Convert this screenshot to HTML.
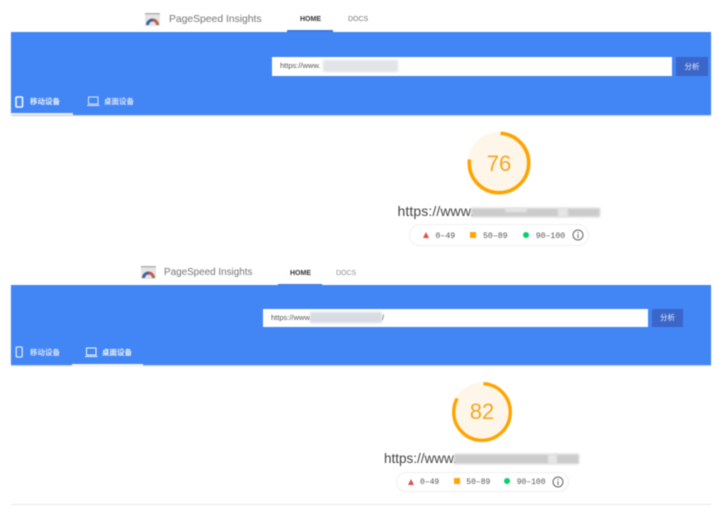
<!DOCTYPE html>
<html lang="zh"><head><meta charset="utf-8">
<style>
html,body{margin:0;padding:0;background:#fff}
#p{position:relative;width:727px;height:513px;overflow:hidden;background:#fff;font-family:"Liberation Sans","Noto Sans CJK SC",sans-serif;filter:blur(.45px)}
#p div{position:absolute;white-space:nowrap}
.b{background:#4285f4}
.ul{background:#3f78d8}
.inp{background:#fff;color:#555;font-size:7.5px}
.btn{background:#3b66c9;color:#e8eefc;font-size:7.5px;text-align:center}
.t{color:#e6eefc;font-size:7.5px;font-weight:bold}
.mono{font-family:"Liberation Mono","DejaVu Sans Mono",monospace;color:#555;font-size:8.2px}
.bl{background:#cbcbcb;filter:blur(1px)}
.pt{background:#e6e6e6;filter:blur(1px)}
.leg{border:1px solid #efefef;border-radius:12px;box-sizing:border-box;background:#fff}
svg{position:absolute;overflow:visible}
</style></head><body><div id="p">

<!-- top logo -->
<svg style="left:145px;top:13px" width="15" height="13" viewBox="0 0 15 13"><rect width="15" height="13" fill="#e4e4e4"/><rect width="15" height="1.4" fill="#b0b0b0"/><path d="M2.5 12A5 5 0 0 1 7.5 7" fill="none" stroke="#3f64a8" stroke-width="3"/><path d="M7.5 7A5 5 0 0 1 11 8.4" fill="none" stroke="#cf5048" stroke-width="3"/><path d="M11 8.4A5 5 0 0 1 12.5 12" fill="none" stroke="#a96a55" stroke-width="3"/></svg>
<div style="left:169px;top:13px;font-size:10.35px;line-height:13px;color:#757575">PageSpeed Insights</div>
<div style="left:300px;top:15px;font-size:7px;line-height:9px;font-weight:bold;color:#333">HOME</div>
<div style="left:348px;top:15px;font-size:7px;line-height:9px;color:#777">DOCS</div>
<div class="ul" style="left:287px;top:30px;width:46px;height:2px"></div>

<!-- top banner -->
<div class="b" style="left:11px;top:32px;width:700px;height:83px;box-shadow:0 1px 1px #c5cbd6"></div>
<div class="inp" style="left:272px;top:57px;width:400px;height:19px;line-height:18px"><span style="margin-left:8px">https://www.</span></div>
<div class="bl" style="left:323px;top:60px;width:75px;height:12px;background:#e2e4ea"></div>
<div class="btn" style="left:676px;top:57px;width:32px;height:19px;line-height:19px">分析</div>
<svg style="left:15px;top:96px" width="9" height="12" viewBox="0 0 9 12"><rect x="1" y="1" width="6.5" height="10" rx="1" fill="none" stroke="#f2f6ff" stroke-width="1.6"/></svg>
<div class="t" style="left:30px;top:96px;line-height:11px">移动设备</div>
<svg style="left:87px;top:96px" width="13" height="11" viewBox="0 0 13 11"><rect x="1.5" y="1" width="9.5" height="7" fill="none" stroke="#dbe6fb" stroke-width="1"/><path d="M0 9.5H12.5" stroke="#dbe6fb" stroke-width="1"/></svg>
<div class="t" style="left:104px;top:96px;line-height:11px;color:#d3e0fa">桌面设备</div>
<div style="left:11px;top:113px;width:62px;height:2px;background:#f0eeee"></div>

<!-- gauge 1 -->
<svg style="left:460px;top:124px" width="78" height="78" viewBox="0 0 78 78"><circle cx="39" cy="39" r="31" fill="#fff6ea"/><circle cx="39" cy="39" r="29.7" fill="none" stroke="#ffa400" stroke-width="3.6" stroke-dasharray="141.8 186.6" transform="rotate(-87 39 39)"/></svg>
<div style="left:469px;top:150px;width:60px;text-align:center;font-size:22px;line-height:28px;color:#f5a623">76</div>
<div style="left:397.5px;top:203px;font-size:14px;line-height:16px;color:#444;letter-spacing:.1px">https://www.</div>
<div class="bl" style="left:471px;top:208px;width:129px;height:9px"></div>
<div class="pt" style="left:505px;top:208px;width:22px;height:4px"></div>
<div class="pt" style="left:558px;top:208px;width:10px;height:9px"></div>
<div class="leg" style="left:409px;top:224px;width:180px;height:22px"></div>
<svg style="left:422.5px;top:232px" width="6" height="6"><path d="M3 0L6 6H0Z" fill="#eb4b3e"/></svg>
<div class="mono" style="left:435.5px;top:231px;line-height:11px">0–49</div>
<div style="left:470px;top:232px;width:6px;height:6px;background:#ffa400"></div>
<div class="mono" style="left:483px;top:231px;line-height:11px">50–89</div>
<div style="left:523px;top:232px;width:6px;height:6px;border-radius:50%;background:#0cce6b"></div>
<div class="mono" style="left:535.7px;top:231px;line-height:11px">90–100</div>
<svg style="left:572px;top:229px" width="12" height="12" viewBox="0 0 12 12"><circle cx="6" cy="6" r="5" fill="none" stroke="#666" stroke-width="1"/><path d="M6 5.2V9M6 3V4.2" stroke="#666" stroke-width="1"/></svg>

<!-- bottom logo -->
<svg style="left:141px;top:266px" width="15" height="13" viewBox="0 0 15 13"><rect width="15" height="13" fill="#e4e4e4"/><rect width="15" height="1.4" fill="#b0b0b0"/><path d="M2.5 12A5 5 0 0 1 7.5 7" fill="none" stroke="#3f64a8" stroke-width="3"/><path d="M7.5 7A5 5 0 0 1 11 8.4" fill="none" stroke="#cf5048" stroke-width="3"/><path d="M11 8.4A5 5 0 0 1 12.5 12" fill="none" stroke="#a96a55" stroke-width="3"/></svg>
<div style="left:164px;top:266px;font-size:9.9px;line-height:13px;color:#757575">PageSpeed Insights</div>
<div style="left:290px;top:269px;font-size:7px;line-height:9px;font-weight:bold;color:#333">HOME</div>
<div style="left:336px;top:269px;font-size:7px;line-height:9px;color:#8d8d8d">DOCS</div>
<div class="ul" style="left:278px;top:284px;width:44px;height:1px"></div>

<!-- bottom banner -->
<div class="b" style="left:11px;top:285px;width:700px;height:80px;box-shadow:0 1px 1px #c5cbd6"></div>
<div class="inp" style="left:263px;top:309px;width:385px;height:18px;line-height:17px"><span style="margin-left:8px">https://www.</span></div>
<div class="bl" style="left:310px;top:312px;width:72px;height:11px;background:#d8dbe4"></div>
<div class="inp" style="left:382px;top:312px;line-height:11px;background:none">/</div>
<div class="btn" style="left:652px;top:309px;width:31px;height:18px;line-height:18px">分析</div>
<svg style="left:15px;top:346px" width="9" height="12" viewBox="0 0 9 12"><rect x="1.2" y="1" width="6" height="10" rx="1" fill="none" stroke="#dbe6fb" stroke-width="1.3"/></svg>
<div class="t" style="left:30px;top:347px;line-height:11px;color:#d3e0fa">移动设备</div>
<svg style="left:85px;top:347px" width="13" height="11" viewBox="0 0 13 11"><rect x="1.5" y="1" width="9.5" height="7" fill="none" stroke="#f2f6ff" stroke-width="1"/><path d="M0 9.5H12.5" stroke="#f2f6ff" stroke-width="1"/></svg>
<div class="t" style="left:102px;top:347px;line-height:11px">桌面设备</div>
<div style="left:72px;top:364px;width:71px;height:1.5px;background:#f4f6fb"></div>

<!-- gauge 2 -->
<svg style="left:444px;top:374px" width="76" height="76" viewBox="0 0 76 76"><circle cx="38" cy="38" r="29.5" fill="#fff6ea"/><circle cx="38" cy="38" r="28.3" fill="none" stroke="#ffa400" stroke-width="3.4" stroke-dasharray="145.8 177.8" transform="rotate(-87 38 38)"/></svg>
<div style="left:452px;top:398px;width:60px;text-align:center;font-size:22px;line-height:28px;color:#f5a623">82</div>
<div style="left:384px;top:451px;font-size:13.5px;line-height:16px;color:#444">https://www.</div>
<div class="bl" style="left:453.5px;top:454px;width:125px;height:9.5px"></div>
<div class="pt" style="left:548px;top:454px;width:9px;height:9.5px"></div>
<div class="leg" style="left:396px;top:472px;width:173px;height:20px"></div>
<svg style="left:408px;top:479px" width="6" height="6"><path d="M3 0L6 6H0Z" fill="#d9534a"/></svg>
<div class="mono" style="left:420px;top:477px;line-height:11px;font-size:8px">0–49</div>
<div style="left:454px;top:478px;width:6px;height:6px;background:#ffa400"></div>
<div class="mono" style="left:466.3px;top:477px;line-height:11px;font-size:8px">50–89</div>
<div style="left:504px;top:478px;width:6px;height:6px;border-radius:50%;background:#0cce6b"></div>
<div class="mono" style="left:516.7px;top:477px;line-height:11px;font-size:8px">90–100</div>
<svg style="left:552px;top:475.5px" width="12" height="12" viewBox="0 0 12 12"><circle cx="6" cy="6" r="5" fill="none" stroke="#666" stroke-width="1"/><path d="M6 5.2V9M6 3V4.2" stroke="#666" stroke-width="1"/></svg>

<div style="left:11px;top:504px;width:700px;height:1px;background:#e8e8e8"></div>
</div></body></html>
